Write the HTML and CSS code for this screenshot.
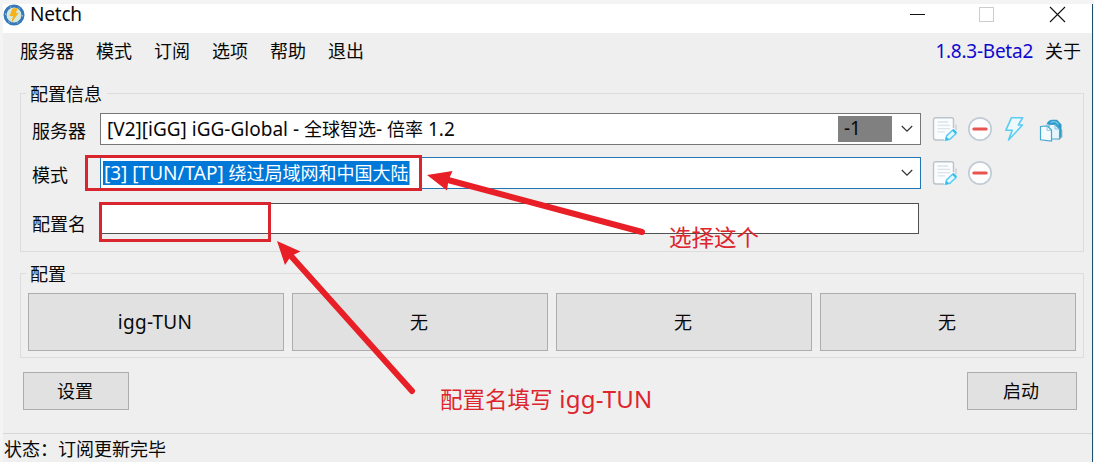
FILE: index.html
```html
<!DOCTYPE html>
<html lang="zh-CN">
<head>
<meta charset="utf-8">
<title>Netch</title>
<link rel="stylesheet" href="styles.css">
</head>
<body>
<svg class="defs" width="0" height="0" aria-hidden="true">
  <symbol id="edit" viewBox="0 0 26 26">
    <path d="M4 1.700H19.500Q21.500 1.700 21.500 3.700V15L14 24H4Q1.500 24 1.500 21.500V4Q1.500 1.700 4 1.700Z" fill="#fafcfd"/>
    <path d="M21.500 12V3.700Q21.500 1.700 19.500 1.700H4Q1.500 1.700 1.500 4V21.500Q1.500 24 4 24H12" fill="none" stroke="#b9c4cc" stroke-width="1.400"/>
    <path d="M5.500 6H16M5.500 9.300H18M5.500 12.600H18M5.500 15.800H13" stroke="#dce3e9" stroke-width="1.300"/>
    <path d="M24 8.500V14" stroke="#c5c9cd" stroke-width="1.200"/>
    <path d="M13.500 24.200L14.600 20L20.500 14.300L24 17.600L17.800 23.200Z" fill="#e8f8fd" stroke="#55cdf2" stroke-width="1.500"/>
    <path d="M20.200 14.200L21.700 12.900L25 16.200L23.700 17.700ZM13.300 24.500L14.400 20.700L17.300 23.400Z" fill="#35bdec"/>
  </symbol>
  <symbol id="remove" viewBox="0 0 26 26">
    <circle cx="13" cy="13" r="11.200" fill="#fdfdfe" stroke="#c2ccd6" stroke-width="1.700"/>
    <path d="M6.800 13H19.200" stroke="#e9534e" stroke-width="3" stroke-linecap="round"/>
  </symbol>
</svg>
<div class="window">
  <header class="titlebar">
    <svg class="logo" width="23" height="23" viewBox="0 0 23 23">
      <circle cx="11" cy="11" r="9" fill="#d5e6dc" stroke="#3779b8" stroke-width="3"/>
      <circle cx="11" cy="11" r="8.600" fill="none" stroke="#a9cde9" stroke-width="1" stroke-dasharray="1.500 7.500"/>
      <path d="M9.500 4.500L14.800 4L12.800 9H15.500L8 19.500L10 12H6.500Z" fill="#f5b21b"/>
    </svg>
    <span class="title">Netch</span>
    <svg class="controls" width="160" height="20" viewBox="0 0 160 20" fill="none">
      <path d="M0 10.500H15" stroke="#111"/>
      <rect x="69.500" y="3.500" width="14" height="14" stroke="#ccc"/>
      <path d="M140 3L155 18M155 3L140 18" stroke="#111" stroke-width="1.100"/>
    </svg>
  </header>
  <nav class="menu">
    <span>服务器</span><span>模式</span><span>订阅</span><span>选项</span><span>帮助</span><span>退出</span>
    <span class="version">1.8.3-Beta2</span><span class="about">关于</span>
  </nav>
  <main>
    <fieldset class="info">
      <legend>配置信息</legend>
      <div class="row">
        <label>服务器</label>
        <div class="combo"><span class="server-text"><span class="latin">[V2][iGG] iGG-Global - </span>全球智选<span class="latin">- </span>倍率<span class="latin"> 1.2</span></span><span class="delay">-1</span>
          <svg class="chevron" width="12" height="8" viewBox="0 0 12 8"><path d="M.8 1L6 6.200L11.200 1" fill="none" stroke="#333" stroke-width="1.200"/></svg>
        </div>
        <div class="tools">
          <svg width="26" height="26"><use href="#edit"/></svg>
          <svg width="26" height="26"><use href="#remove"/></svg>
          <svg width="26" height="26" viewBox="0 0 26 26"><path d="M9.500 1.700H20.700L16.300 9H20.500L6.500 24L10.200 14.300H3.800Z" fill="#edf9fd" stroke="#5acdf3" stroke-width="1.600" stroke-linejoin="round"/></svg>
          <svg class="copy" width="26" height="26" viewBox="0 0 26 26">
            <path d="M20 12L24.500 14V21L22 23.500H19Z" fill="#bdbdbd"/>
            <path d="M8.500 8.500Q9.500 4.500 14 3.800H19L23.500 8.500V21L21 22.500V13L17 8Z" fill="#2d9bcb"/>
            <path d="M12.500 6.500Q15 5 18 6L20.500 8.500" fill="none" stroke="#7bcbe8" stroke-width="1.200"/>
            <path d="M11 8.500H17L21.500 13V23H11Z" fill="#e6f5fb" stroke="#45a7d1" stroke-width="1.100"/>
            <path d="M2.500 10.500L9 9.800L13.500 14V25L2.500 23.800Z" fill="#f5fbfd" stroke="#45a7d1" stroke-width="1.200"/>
            <path d="M9 10V14.300H13M17 9V13H21" fill="none" stroke="#6bbddd" stroke-width=".8"/>
          </svg>
        </div>
      </div>
      <div class="row">
        <label>模式</label>
        <div class="combo focused"><span class="selection"><span class="latin">[3] [TUN/TAP] </span>绕过局域网和中国大陆</span>
          <svg class="chevron" width="12" height="8" viewBox="0 0 12 8"><path d="M.8 1L6 6.200L11.200 1" fill="none" stroke="#333" stroke-width="1.200"/></svg>
        </div>
        <div class="tools">
          <svg width="26" height="26"><use href="#edit"/></svg>
          <svg width="26" height="26"><use href="#remove"/></svg>
        </div>
      </div>
      <div class="row name-row"><label>配置名</label><div class="name-input"></div></div>
    </fieldset>
    <fieldset class="profiles">
      <legend>配置</legend>
      <div class="profile-grid">
        <button><span class="igg">igg-TUN</span></button><button>无</button><button>无</button><button>无</button>
      </div>
    </fieldset>
    <div class="actions"><button class="settings">设置</button><button class="start">启动</button></div>
  </main>
  <footer>状态：订阅更新完毕</footer>
</div>
<svg class="annotations" width="1094" height="462" viewBox="0 0 1094 462">
  <g fill="none" stroke="#d9262e" stroke-width="3">
    <rect x="86.500" y="156.500" width="334" height="33"/>
    <rect x="100.500" y="203.500" width="169" height="37"/>
  </g>
  <g stroke="#e81f27" stroke-width="6" stroke-linecap="round">
    <path d="M448 180L642 232"/>
    <path d="M291 256L412 391"/>
  </g>
  <path d="M427 175L452.500 171L448.500 180L447 190.500ZM277 241L300.500 251.500L291 256L285 265Z" fill="#e81f27"/>
</svg>
<span class="note choose">选择这个</span>
<span class="note fill">配置名填写 <span class="note-latin">igg-TUN</span></span>
</body>
</html>
```

FILE: styles.css
```css
* { box-sizing: border-box; }
body {
  margin: 0;
  padding: 4px 1px 0 3px;
  height: 462px;
  overflow: hidden;
  background: #f4f4f4;
  color: #080808;
  font: 18px/20px "Noto Sans", "Noto Sans CJK SC", sans-serif;
}
.defs { position: absolute; }
.window {
  height: 458px;
  display: flex;
  flex-direction: column;
  background: #efefef;
  border-right: 1px solid #1d4e70;
}
.titlebar { height: 29px; display: flex; background: #fff; }
.logo { margin-right: 4px; }
.title { font-size: 19px; line-height: 21px; letter-spacing: -.2px; }
.controls { margin-left: auto; margin-right: 22px; }
.menu { height: 51px; padding: 8px 11px 0 17px; display: flex; gap: 22px; }
.menu .version { margin-left: auto; color: #1008d0; font-size: 19px; letter-spacing: -.25px; }
.menu .about { margin-left: -10px; }
main { padding: 0 8px 0 17px; height: 349px; }
fieldset { margin: 0; border: 1px solid #dcdcdc; min-width: 0; }
legend { height: 19px; line-height: 20px; margin: 0; padding: 0 5px 0 4px; }
.info { height: 168px; padding: 10px 0 0 11px; }
.info legend { margin-left: -6px; }
.row { height: 32px; display: flex; align-items: center; margin-bottom: 12px; }
label { width: 68px; padding-top: 4px; }
.combo {
  width: 821px;
  height: 32px;
  display: flex;
  align-items: center;
  background: #fff;
  border: 1px solid #777;
  padding: 0 7px 0 6px;
}
.latin { font-size: 19px; }
.server-text { line-height: 20px; padding-bottom: 1px; }
.delay { width: 54px; height: 26px; margin-left: auto; margin-right: 9px; padding-left: 6px; font-size: 19px; line-height: 24px; background: #808080; }
.focused { border-color: #2475b3; padding-left: 2px; }
.selection { height: 24px; line-height: 24px; padding: 0 0 0 1px; color: #fff; background: #0078d7; border-right: 1px solid #e6a267; white-space: nowrap; }
.focused .chevron { margin-left: auto; }
.tools { display: flex; gap: 9px; margin-left: 11px; }
.tools .copy { margin-left: 1px; }
.name-row { height: 31px; margin-top: 14px; }
.name-row label { padding-top: 10px; }
.name-input { width: 818px; height: 31px; margin-left: 1px; background: #fff; border: 1px solid #505050; }
.profiles { height: 94px; margin-top: 12px; padding: 10px 7px 0; }
.profiles legend { margin-left: -2px; }
.profile-grid { height: 58px; display: grid; grid-template-columns: repeat(4, 256px); gap: 8px; }
button { background: #e1e1e1; border: 1px solid #adadad; color: #080808; font: inherit; padding: 0 2px 0 0; }
.igg { font-size: 19px; letter-spacing: .25px; }
.actions { display: flex; justify-content: space-between; padding: 14px 7px 0 3px; }
.settings { width: 106px; height: 38px; }
.start { width: 110px; height: 38px; }
footer { height: 29px; padding: 5px 0 0 1px; border-top: 1px solid #d7d7d7; }
.annotations { position: absolute; left: 0; top: 0; }
.note { position: absolute; color: #de252d; font-size: 22.5px; line-height: 28px; white-space: nowrap; }
.choose { left: 669px; top: 224px; }
.fill { left: 440px; top: 385px; }
.note .note-latin { margin-left: 1px; font-size: 24px; letter-spacing: .2px; }
```
